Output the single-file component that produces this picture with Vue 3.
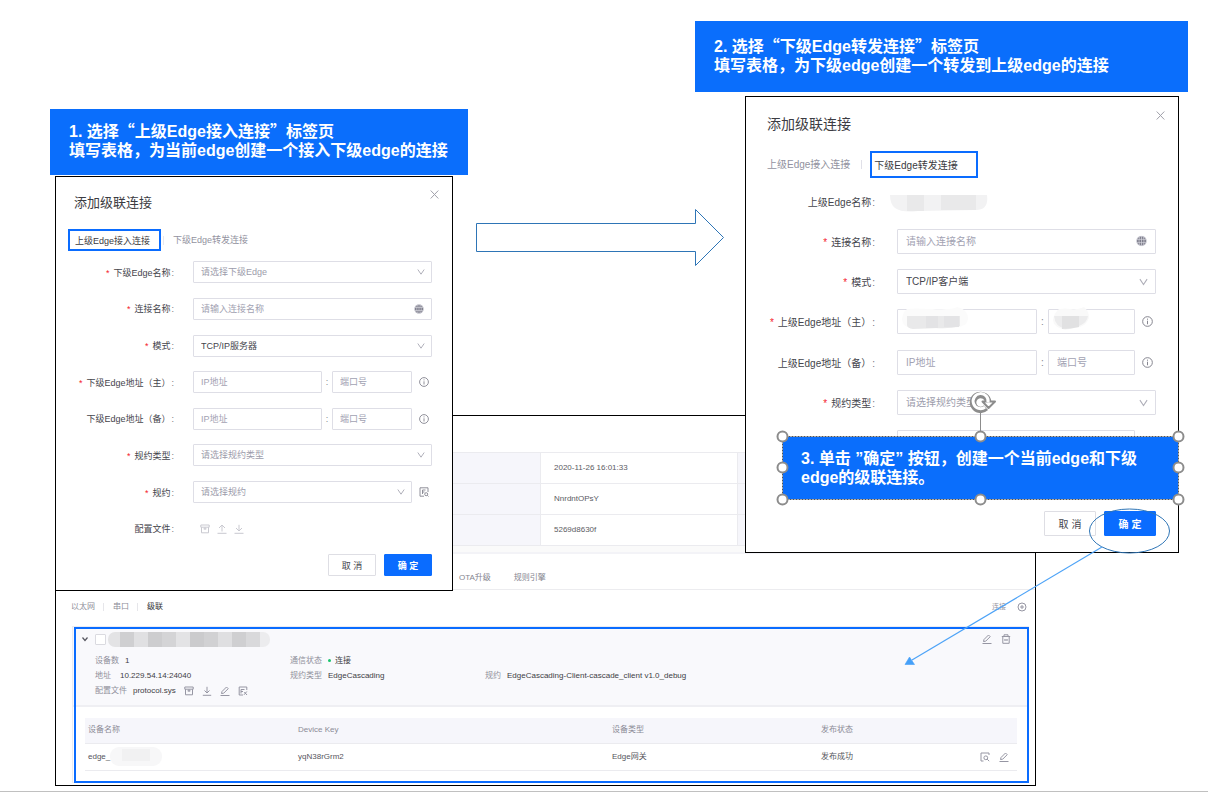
<script setup>
import { reactive } from 'vue'

const dialogs = reactive([
  {
    id: 'parent',
    tabs: [
      { text: '上级Edge接入连接', active: true },
      { text: '下级Edge转发连接', active: false },
    ],
    fields: [
      { kind: 'select', label: '下级Edge名称', required: true, text: '请选择下级Edge', empty: true },
      { kind: 'name', label: '连接名称', required: true, text: '请输入连接名称' },
      { kind: 'select', label: '模式', required: true, text: 'TCP/IP服务器' },
      { kind: 'address', label: '下级Edge地址（主）', required: true },
      { kind: 'address', label: '下级Edge地址（备）' },
      { kind: 'select', label: '规约类型', required: true, text: '请选择规约类型', empty: true },
      { kind: 'select', label: '规约', required: true, text: '请选择规约', empty: true, lookup: true },
      { kind: 'files', label: '配置文件' },
    ],
  },
  {
    id: 'child',
    tabs: [
      { text: '上级Edge接入连接', active: false },
      { text: '下级Edge转发连接', active: true },
    ],
    fields: [
      { kind: 'masked', label: '上级Edge名称' },
      { kind: 'name', label: '连接名称', required: true, text: '请输入连接名称' },
      { kind: 'select', label: '模式', required: true, text: 'TCP/IP客户端' },
      { kind: 'address', label: '上级Edge地址（主）', required: true, masked: true },
      { kind: 'address', label: '上级Edge地址（备）' },
      { kind: 'select', label: '规约类型', required: true, text: '请选择规约类型', empty: true },
      { kind: 'select', aria: '规约', text: '', empty: true, lookup: true },
    ],
  },
])

const summary = ['2020-11-26 16:01:33', 'NnrdntOPsY', '5269d8630f']
const nameMask = ['#e3e3e5', '#cfcfd1', '#e0e0e2', '#cdcdcf', '#d4d4d6', '#e3e3e5', '#cbcbcd', '#d1d1d3', '#dfdfe1', '#cfcfd1', '#d9d9db', '#ececee']
</script>

<template>
  <main class="stage">
    <section class="console">
      <table class="summary">
        <tbody>
          <tr v-for="value in summary" :key="value">
            <th></th>
            <td>{{ value }}</td>
            <th></th>
          </tr>
        </tbody>
      </table>
      <div class="band"></div>
      <nav class="main-tabs">
        <button type="button">OTA升级</button>
        <button type="button">规则引擎</button>
      </nav>
      <div class="sub-bar">
        <nav class="sub-tabs">
          <button type="button">以太网</button>
          <button type="button">串口</button>
          <button type="button" class="on">级联</button>
        </nav>
        <button type="button" class="add">
          <span>连接</span>
          <svg width="10" height="10" viewBox="0 0 10 10"><circle cx="5" cy="5" r="4" /><path d="M5 3v4M3 5h4" /></svg>
        </button>
      </div>

      <article class="card">
        <header class="card-head">
          <div class="card-title">
            <svg class="fold" width="8" height="8" viewBox="0 0 8 8"><path d="M1.500 2.500 4 5.500 6.500 2.500" /></svg>
            <input type="checkbox" aria-label="选择连接" />
            <svg width="162" height="15" viewBox="0 0 162 15">
              <clipPath id="nameClip"><rect width="162" height="15" rx="7" /></clipPath>
              <g clip-path="url(#nameClip)">
                <rect v-for="(c, i) in nameMask" :key="i" :x="i * 14 - 2" y="0" width="14" height="15" :fill="c" />
              </g>
            </svg>
            <span class="tools">
              <button type="button" aria-label="编辑">
                <svg width="10" height="10" viewBox="0 0 10 10"><path d="M1.500 7.500 2 5.500 6.500 1 8.200 2.700 3.700 7.200zM.5 9.500h9" /></svg>
              </button>
              <button type="button" aria-label="删除">
                <svg width="10" height="10" viewBox="0 0 10 10"><path d="M.8 2.500h8.400M3 2.300V.8h4v1.500M1.800 2.800v6.500h6.400V2.800M3.800 5.200v1.500M6.200 5.200v1.500M3.800 6h2.400" /></svg>
              </button>
            </span>
          </div>
          <div class="facts">
            <p>设备数 <b>1</b></p>
            <p>通信状态 <i class="dot"></i><b class="tight">连接</b></p>
            <p></p>
            <p>地址 <b class="wide">10.229.54.14:24040</b></p>
            <p>规约类型 <b>EdgeCascading</b></p>
            <p>规约 <b>EdgeCascading-Client-cascade_client v1.0_debug</b></p>
            <p>
              配置文件 <b>protocol.sys</b>
              <span class="file-tools">
                <svg width="10" height="10" viewBox="0 0 10 10"><path d="M.8 1h8.400v2.200H.8zM1.500 3.200v5.600h7V3.200M5 3.200v2.800M3.500 4.800h3" /></svg>
                <svg width="10" height="10" viewBox="0 0 10 10"><path d="M5 .8v6M2.500 4.500 5 7l2.500-2.500M.8 9.300h8.400" /></svg>
                <svg width="10" height="10" viewBox="0 0 10 10"><path d="M1.500 7.500 2 5.500 6.500 1 8.200 2.700 3.700 7.200zM.5 9.500h9" /></svg>
                <svg width="10" height="10" viewBox="0 0 10 10"><path d="M8.800 4V1H1.200v8H5M3 3.500h3.500M3 5.500h2M3 3.500v4M6 8.800l2.800-3.300M6.300 6l2.700 3" /></svg>
              </span>
            </p>
          </div>
        </header>
        <table class="devices">
          <thead>
            <tr><th class="c1">设备名称</th><th class="c2">Device Key</th><th class="c3">设备类型</th><th>发布状态</th><th class="c5"></th></tr>
          </thead>
          <tbody>
            <tr>
              <td>
                <span class="edge-name">edge_<svg width="52" height="19" viewBox="0 0 52 19"><rect width="52" height="19" rx="9" fill="#f7f7f8" /><rect x="12" y="2" width="28" height="12" fill="#f1f1f2" /></svg></span>
              </td>
              <td>yqN38rGrm2</td>
              <td>Edge网关</td>
              <td>发布成功</td>
              <td>
                <span class="row-tools">
                  <button type="button" aria-label="查看">
                    <svg width="10" height="10" viewBox="0 0 10 10"><path d="M9 3V1H1v8h2.500" /><circle cx="5.800" cy="5.800" r="1.900" /><path d="M7.200 7.200 9.200 9.200" /></svg>
                  </button>
                  <button type="button" aria-label="编辑设备">
                    <svg width="10" height="10" viewBox="0 0 10 10"><path d="M1.500 7.500 2 5.500 6.500 1 8.200 2.700 3.700 7.200zM.5 9.500h9" /></svg>
                  </button>
                </span>
              </td>
            </tr>
          </tbody>
        </table>
      </article>
    </section>

    <section v-for="d in dialogs" :key="d.id" class="dialog" :class="d.id" role="dialog">
      <header class="dialog-head">
        <h2>添加级联连接</h2>
        <button type="button" class="close" aria-label="关闭">
          <svg viewBox="0 0 9 9"><path d="M.7.5 8.300 8.500M8.300.5.7 8.500" /></svg>
        </button>
      </header>
      <nav class="tabs">
        <button v-for="t in d.tabs" :key="t.text" type="button" :class="{ on: t.active }">{{ t.text }}</button>
      </nav>
      <form class="form" @submit.prevent>
        <div v-for="(f, i) in d.fields" :key="i" class="row">
          <label :for="d.id + i"><template v-if="f.label"><em v-if="f.required">*</em>{{ f.label }}<s>:</s></template></label>
          <div class="field">
            <span v-if="f.kind === 'select'" class="box">
              <select :id="d.id + i" :aria-label="f.aria" :class="{ empty: f.empty }"><option>{{ f.text }}</option></select>
              <svg class="chev" viewBox="0 0 8 8"><path d="M.8 1.500 4 6.200 7.200 1.500" /></svg>
            </span>
            <span v-else-if="f.kind === 'name'" class="box">
              <input :id="d.id + i" type="text" :placeholder="f.text" />
              <svg class="globe" viewBox="0 0 10 10"><circle cx="5" cy="5" r="4.500" fill="#7d7d8b" /><path d="M.8 3.500h8.400M.8 6.500h8.400M5 .5v9M3.500 1C2.500 3.500 2.500 6.500 3.500 9M6.500 1c1 2.500 1 5.500 0 8" /></svg>
            </span>
            <template v-else-if="f.kind === 'address'">
              <span class="box">
                <input :id="d.id + i" type="text" :placeholder="f.masked ? '' : 'IP地址'" />
                <svg v-if="f.masked" class="mask" width="66" height="23" viewBox="0 0 66 23"><path d="M5 2Q10 1 30 2T55 0Q66 2 66 12 65 20 52 21L12 22Q0 20 0 12 1 5 5 2z" fill="#fbfbfb" /><path d="M5 9h53v10q-10 3-24 2l-23 1q-6-1-6-4z" fill="#e9e9ea" /><path d="M24 9h12v12H24zM42 9h15v11H42z" fill="#e3e3e5" /></svg>
              </span>
              <span class="colon">:</span>
              <span class="box port">
                <input type="text" aria-label="端口号" :placeholder="f.masked ? '' : '端口号'" />
                <svg v-if="f.masked" class="mask" width="36" height="23" viewBox="0 0 36 23"><path d="M6 2Q12 1 18 2T31 0Q36 4 36 11 33 20 22 21L12 23Q0 20 0 13 1 6 6 2z" fill="#f9f9f9" /><path d="M1 9h34q-1 7-9 10-6 2-13 3Q2 20 1 9z" fill="#ececed" /><path d="M9 9h17v11q-8 2-17 2z" fill="#e1e1e2" /></svg>
              </span>
              <span class="slot">
                <svg viewBox="0 0 10 10"><circle cx="5" cy="5" r="4.400" /><path d="M5 4.300v3.200M5 2.400v1" /></svg>
              </span>
            </template>
            <svg v-else-if="f.kind === 'masked'" class="masked-name" width="98" height="17" viewBox="0 0 98 17">
              <path d="M0 0H97Q99 15 86 15L28 16Q12 18 5 13 0 9 0 0z" fill="#f2f2f3" />
              <path d="M17 0h17v16H17zM51 0h35v15H51z" fill="#e9e9ea" />
            </svg>
            <span v-else class="files">
              <svg viewBox="0 0 10 10"><path d="M.8 1h8.400v2.200H.8zM1.500 3.200v5.600h7V3.200M5 3.200v2.800M3.500 4.800h3" /></svg>
              <svg viewBox="0 0 10 10"><path d="M5 7.500v-6M2 4 5 1l3 3M.5 9.300h9" /></svg>
              <svg viewBox="0 0 10 10"><path d="M5 .8v6M2 4 5 7l3-3M.5 9.300h9" /></svg>
            </span>
            <span v-if="f.lookup" class="slot">
              <svg viewBox="0 0 10 10"><path d="M9 5V.8H1v8.400h4M3.500 3h3M3.500 5h2M3.500 3v4" /><circle cx="7.200" cy="7.200" r="1.500" /><path d="M8.300 8.300 9.500 9.500" /></svg>
            </span>
          </div>
        </div>
      </form>
      <footer class="dialog-foot">
        <button type="button">取 消</button>
        <button type="button" class="primary">确 定</button>
      </footer>
    </section>

    <p class="callout step1">1. 选择<q>“</q>上级Edge接入连接<q>”</q>标签页<br />填写表格，为当前edge创建一个接入下级edge的连接</p>
    <p class="callout step2">2. 选择<q>“</q>下级Edge转发连接<q>”</q>标签页<br />填写表格，为下级edge创建一个转发到上级edge的连接</p>
    <div class="callout step3">
      3. 单击 ”确定” 按钮，创建一个当前edge和下级edge的级联连接。
      <svg class="handles" width="412" height="114" viewBox="-8 -50 412 114">
        <path d="M198.500-24V0" stroke="#8c8c8c" />
        <rect x=".5" y=".5" width="396" height="63" fill="none" stroke="#fff" />
        <rect x=".5" y=".5" width="396" height="63" fill="none" stroke="#555" stroke-dasharray="2 1" />
        <g fill="none" stroke="#8c8c8c">
          <path d="M203.800-28.200A7.500 7.500 0 1 1 206-34.500" stroke-width="6.500" />
          <path d="M200.500-34.500h12.500l-6.500 6.500z" fill="#fff" stroke-width="2" stroke-linejoin="round" />
        </g>
        <path d="M203-28.800A7.500 7.500 0 1 1 206-33.500" fill="none" stroke="#fff" stroke-width="3" />
        <g fill="#fff" stroke="#8c8c8c" stroke-width="2">
          <circle cx=".5" cy=".5" r="5" /><circle cx="198.500" cy=".5" r="5" /><circle cx="396.500" cy=".5" r="5" />
          <circle cx=".5" cy="31.500" r="5" /><circle cx="396.500" cy="31.500" r="5" />
          <circle cx=".5" cy="63.500" r="5" /><circle cx="198.500" cy="63.500" r="5" /><circle cx="396.500" cy="63.500" r="5" />
        </g>
      </svg>
    </div>

    <svg class="flow-arrow" width="250" height="60" viewBox="0 0 250 60">
      <path d="M1.500 15.500H220.500V1.500L248.500 29.500 220.500 57.500V43.500H1.500z" fill="#fff" stroke="#2e75b6" />
    </svg>
    <svg class="pointer" width="270" height="160" viewBox="0 0 270 160">
      <ellipse cx="229.500" cy="23" rx="40" ry="22" fill="none" stroke="#2e75b6" />
      <path d="M202 39 12 152" fill="none" stroke="#4da3f7" stroke-width="1.200" />
      <path d="M5 156.500 9.500 149 14.500 156.500z" fill="#45a0f8" stroke="#45a0f8" stroke-width=".6" />
    </svg>
  </main>
</template>

<style>
body { margin: 0; background: #fff; }
</style>

<style scoped>
.stage {
  position: relative;
  box-sizing: border-box;
  min-height: 100vh;
  border-bottom: 1px solid #c0c0c0;
  overflow: hidden;
  font-family: "Liberation Sans", "Noto Sans CJK SC", sans-serif;
  color: #45454c;
}
.stage * { box-sizing: border-box; }
button, input, select { font: inherit; color: inherit; margin: 0; }
button { padding: 0; border: 0; background: none; cursor: pointer; white-space: nowrap; }
svg { display: block; flex: none; }
h2, p { margin: 0; font-weight: normal; }

/* console */
.console {
  position: absolute;
  left: 55px;
  top: 415px;
  width: 981px;
  min-height: 371px;
  border: 1px solid #000;
  background: #fff;
  padding-top: 36px;
  font-size: 8px;
  line-height: 14px;
}
.console svg { fill: none; stroke: #9696a3; stroke-width: 1; }
.console svg rect { stroke: none; }
.summary { width: 100%; border-collapse: collapse; table-layout: fixed; }
.summary th, .summary td { height: 31px; padding: 0 13px; border: 1px solid #ebebef; text-align: left; color: #5b5b63; }
.summary th { background: #f6f6fb; }
.summary th:first-child { width: 484px; }
.summary td { width: 197px; }
.band { height: 8px; background: #fafafa; border-bottom: 2px solid #f3f3f7; }
.main-tabs { display: flex; gap: 23px; height: 36px; padding-left: 403px; align-items: center; padding-top: 12px; border-bottom: 1px solid #ececef; color: #85858f; }
.sub-bar { display: flex; justify-content: space-between; align-items: center; height: 34px; padding: 0 8px 0 15px; }
.sub-tabs { display: flex; color: #8e8e99; }
.sub-tabs button { line-height: 8px; }
.sub-tabs button + button { margin-left: 8px; padding-left: 9px; border-left: 1px solid #e6e6ea; }
.sub-tabs .on { color: #333338; }
.add { display: flex; align-items: center; gap: 11px; color: #9696a0; font-size: 7px; }

.card { position: relative; margin: 2px 6px 0 16px; border: 1px solid #ececf1; padding-bottom: 11px; }
.card::after { content: ""; position: absolute; inset: 0 -1px -1px 1px; border: 2px solid #0a6cff; pointer-events: none; }
.card-head { height: 80px; background: #f9f9fc; border-bottom: 2px solid #efeff3; }
.card-title { display: flex; align-items: center; height: 24px; margin-bottom: 2px; padding: 0 17px 0 8px; }
.card .fold { stroke: #55555e; stroke-width: 1.2; margin-right: 6px; }
.card-title input { appearance: none; width: 11px; height: 11px; border: 1px solid #dadae0; border-radius: 1px; background: #fff; margin-right: 2px; }
.tools { display: flex; gap: 9px; margin-left: auto; }
.facts { display: grid; grid-template-columns: 195px 195px 1fr; grid-auto-rows: 15px; padding-left: 22px; color: #90909b; }
.facts p { display: flex; align-items: center; white-space: nowrap; }
.facts b { font-weight: normal; color: #3e3e45; margin-left: 6px; }
.facts .wide { margin-left: 9px; }
.facts .tight { margin-left: 4px; }
.dot { width: 3px; height: 3px; border-radius: 50%; background: #18c46c; margin-left: 6px; }
.file-tools { display: flex; gap: 8px; margin-left: 8px; }

.devices { width: calc(100% - 23px); margin: 11px 11px 0 12px; border-collapse: collapse; table-layout: fixed; text-align: left; }
.devices th, .devices td { padding: 0 3px; border-bottom: 1px solid #ebebef; font-weight: normal; }
.devices th { height: 25px; background: #f6f6fb; color: #8b8b96; }
.devices td { height: 27px; color: #55555d; }
.c1 { width: 210px; }
.c2 { width: 314px; }
.c3 { width: 209px; }
.c5 { width: 40px; }
.edge-name { display: flex; align-items: center; }
.row-tools { display: flex; gap: 9px; }

/* dialogs */
.dialog { position: absolute; display: flex; flex-direction: column; border: 1px solid #000; background: #fff; }
.parent {
  left: 55px; top: 176px; width: 398px; min-height: 415px; font-size: 9px;
  --title: 13px; --ctl: 22px; --head: 51px; --left: 18px; --label: 118px; --gap: 19px; --end: 20px;
  --port: 80px; --colon: 10px; --pad: 7px; --icon: 10px; --chev: 8px; --slot: 20px; --btn: 48px; --top: 13px;
  --tab: 22px; --tabw: 93px; --foot: 7px 20px 14px;
}
.child {
  left: 745px; top: 96px; width: 434px; min-height: 457px; font-size: 10px;
  --title: 14px; --ctl: 25px; --head: 54px; --left: 21px; --label: 129px; --gap: 22px; --end: 22px;
  --port: 87px; --colon: 11px; --pad: 8px; --icon: 11px; --chev: 9px; --slot: 21px; --btn: 52px; --top: 14px;
  --tab: 27px; --tabw: 108px; --foot: 48px 22px 16px;
}
.dialog-head { display: flex; justify-content: space-between; height: var(--head); padding-left: var(--left); }
.dialog-head h2 { font-size: var(--title); line-height: var(--head); color: #3c3c42; }
.close { align-self: flex-start; margin: var(--top) 13px 0 0; }
.close svg { width: 9px; height: 9px; fill: none; stroke: #a0a0aa; }
.tabs { display: flex; align-items: center; margin: 1px 0 3px; color: #9292a0; }
.parent .tabs { padding-left: 12px; }
.child .tabs { padding-left: 21px; margin-top: 0; }
.tabs .on { height: var(--tab); min-width: var(--tabw); border: 2px solid #0a6cff; text-align: left; color: #3b3b41; }
.parent .on { padding: 0 5px; }
.child .on { padding: 0 2px; margin-left: 8px; }
.tabs button:not(.on) { line-height: 9px; }
.parent .tabs button:not(.on) { border-left: 1px solid #e8e8ee; margin-left: 2px; padding-left: 9px; }
.child .tabs button:not(.on) { border-right: 1px solid #e0e0e8; padding-right: 11px; }
.form { flex: 1; display: grid; grid-auto-rows: 1fr; padding-right: var(--end); }
.row { display: grid; grid-template-columns: var(--label) 1fr; column-gap: var(--gap); align-items: center; }
.row label { text-align: right; white-space: nowrap; color: #45454c; }
.row em { color: #f5222d; font-style: normal; margin-right: 4px; }
.row s { text-decoration: none; margin-left: 1px; color: #77777f; }
.field { display: flex; align-items: center; min-width: 0; }
.box { position: relative; display: flex; flex: 1; min-width: 0; height: var(--ctl); }
.port { flex: none; width: var(--port); }
.box input, .box select {
  width: 100%; height: 100%; min-width: 0; padding: 0 var(--pad); border: 1px solid #dedee6; border-radius: 1px;
  background: #fff; appearance: none; outline: 0; color: #45454c;
}
.box input::placeholder { color: #a2a2b2; opacity: 1; }
.box select.empty { color: #9c9cab; }
.chev, .globe { position: absolute; top: 50%; transform: translateY(-50%); right: var(--pad); width: var(--chev); fill: none; stroke: #b0b0ba; }
.globe { width: var(--icon); right: 8px; stroke: #dcdce3; stroke-width: .6; }
.child .globe { right: 9px; }
.mask { position: absolute; left: 5px; top: -2px; }
.colon { width: var(--colon); text-align: center; color: #85858f; }
.slot { width: var(--slot); padding-left: 7px; }
.slot svg { width: var(--icon); height: var(--icon); fill: none; stroke: #85858f; stroke-width: .9; }
.masked-name { margin: 4px 0 0 -7px; }
.files { display: flex; gap: 7px; padding-left: 7px; }
.files svg { width: 10px; height: 10px; fill: none; stroke: #c9c9d0; }
.dialog-foot { display: flex; justify-content: flex-end; gap: 8px; padding: var(--foot); }
.dialog-foot button { width: var(--btn); height: var(--ctl); border: 1px solid #dedee4; border-radius: 1px; }
.dialog-foot .primary { background: #0a6cff; border-color: #0a6cff; color: #fff; font-weight: bold; }

/* annotations */
.callout {
  position: absolute; background: #0a6efc; color: #fff; padding: 13px 19px 12px; font-weight: bold; font-size: 16px; line-height: 19px;
}
.callout q { quotes: none; font-family: "Noto Sans CJK SC", sans-serif; line-height: 1; }
.callout q::before, .callout q::after { content: none; }
.step1 { left: 50px; top: 109px; width: 418px; min-height: 66px; padding-right: 0; }
.step2 { left: 695px; top: 21px; width: 493px; min-height: 71px; padding-top: 16px; }
.step3 { left: 782px; top: 436px; width: 397px; min-height: 64px; }
.handles { position: absolute; left: -8px; top: -50px; overflow: visible; }
.flow-arrow { position: absolute; left: 475px; top: 208px; }
.pointer { position: absolute; left: 900px; top: 508px; pointer-events: none; }
</style>
